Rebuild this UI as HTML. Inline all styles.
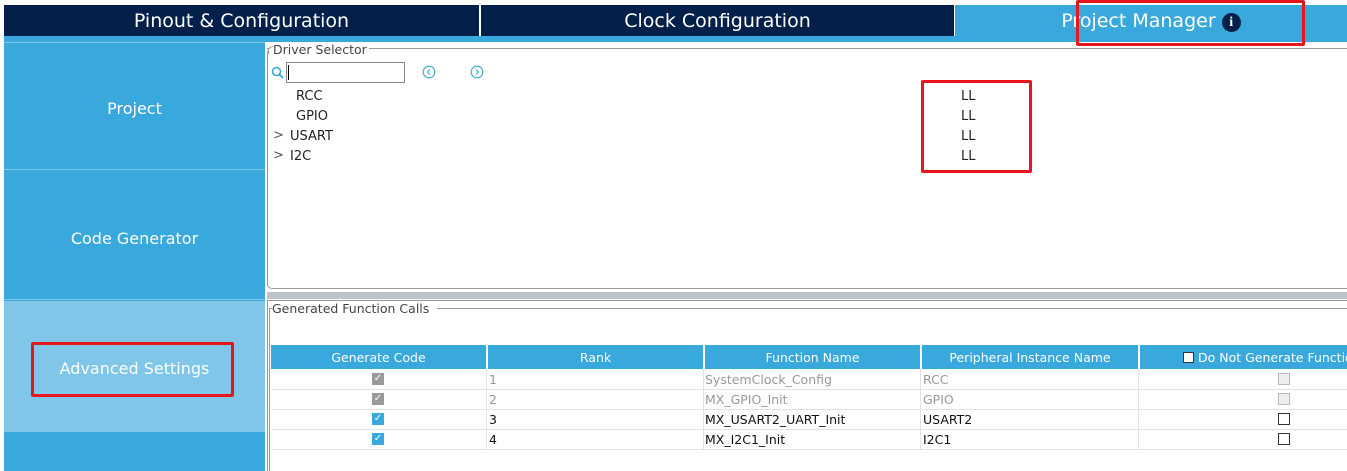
<!DOCTYPE html>
<html><head><style>
*{margin:0;padding:0;box-sizing:border-box}
body{width:1347px;height:471px;background:#fff;font-family:"Liberation Sans","DejaVu Sans",sans-serif;position:relative;overflow:hidden}
.a{position:absolute}
.tab{top:5px;height:31px;color:#fff;font-size:19px;text-align:center;line-height:33px;font-family:"DejaVu Sans",sans-serif}
.side{left:4px;width:261px;color:#fff;font-size:16px;text-align:center;font-family:"DejaVu Sans",sans-serif}
.t{font-size:13px;color:#222;font-family:"DejaVu Sans",sans-serif}
.hd{top:345px;height:24px;background:#39a8dc;color:#fff;font-size:12.5px;text-align:center;line-height:25px;font-family:"DejaVu Sans",sans-serif}
.cell{font-size:12.5px;font-family:"DejaVu Sans",sans-serif;line-height:21px}
.cb{width:12px;height:12px;border:1px solid #333;background:#fff}
.ck{width:12px;height:12px;background:#39a8dc;color:#fff;font-size:10px;line-height:12px;text-align:center}
.red{border:3px solid #e8141e;border-radius:2px}
</style></head><body>
<div class="a" style="left:4px;top:5px;width:1343px;height:31px;background:#03204a"></div>
<div class="a tab" style="left:4px;width:475px">Pinout &amp; Configuration</div>
<div class="a" style="left:479px;top:5px;width:2px;height:31px;background:#fff"></div>
<div class="a tab" style="left:481px;width:473px">Clock Configuration</div>
<div class="a" style="left:954px;top:5px;width:1px;height:31px;background:#fff"></div>
<div class="a tab" style="left:955px;width:392px;background:#39a8dc">Project Manager <span style="display:inline-block;width:19px;height:19px;border-radius:50%;background:#03204a;color:#fff;font-size:14px;line-height:19px;font-weight:bold;vertical-align:1px;font-family:'Liberation Serif',serif">i</span></div>
<div class="a" style="left:4px;top:36px;width:1343px;height:6px;background:#39a8dc"></div>
<div class="a" style="left:267px;top:48px;width:1080px;height:1px;background:#999"></div>
<div class="a red" style="left:1076px;top:0px;width:229px;height:46px"></div>

<div class="a" style="left:4px;top:42px;width:261px;height:429px;background:#39a8dc"></div>
<div class="a" style="left:4px;top:42px;width:261px;height:1px;background:#7fc6e8"></div>
<div class="a side" style="top:99px">Project</div>
<div class="a" style="left:4px;top:169px;width:261px;height:1px;background:#7fc6e8"></div>
<div class="a side" style="top:229px">Code Generator</div>
<div class="a" style="left:4px;top:299px;width:261px;height:1px;background:#7fc6e8"></div>
<div class="a" style="left:4px;top:301px;width:261px;height:131px;background:#7fc6e8"></div>
<div class="a side" style="top:359px">Advanced Settings</div>
<div class="a red" style="left:31px;top:342px;width:203px;height:55px"></div>

<div class="a" style="left:267px;top:48px;width:1090px;height:241px;border:1px solid #999;border-radius:5px 0 0 5px;border-top:none"></div>
<div class="a" style="left:268px;top:46px;width:8px;height:8px;border-left:1px solid #999;border-top:1px solid #999;border-radius:5px 0 0 0;background:#fff"></div>
<div class="a t" style="left:273px;top:42px;background:#fff;padding-right:2px;color:#444;font-size:12.5px">Driver Selector</div>
<svg class="a" style="left:271px;top:66px" width="14" height="14"><circle cx="5.5" cy="5.5" r="4" fill="none" stroke="#39a8dc" stroke-width="1.6"/><path d="M8.5 8.5L12 12" stroke="#39a8dc" stroke-width="1.8"/></svg>
<div class="a" style="left:286px;top:62px;width:119px;height:21px;border:1px solid #888"></div>
<div class="a" style="left:288px;top:65px;width:1px;height:15px;background:#000"></div>
<svg class="a" style="left:422px;top:65px" width="14" height="14"><circle cx="7" cy="7" r="5.8" fill="none" stroke="#39a8dc" stroke-width="1.1"/><path d="M8 4.5L5.5 7L8 9.5" fill="none" stroke="#39a8dc" stroke-width="1.1"/></svg>
<svg class="a" style="left:470px;top:65px" width="14" height="14"><circle cx="7" cy="7" r="5.8" fill="none" stroke="#39a8dc" stroke-width="1.1"/><path d="M6 4.5L8.5 7L6 9.5" fill="none" stroke="#39a8dc" stroke-width="1.1"/></svg>
<div class="a t" style="left:296px;top:89px">RCC</div>
<div class="a t" style="left:296px;top:109px">GPIO</div>
<div class="a t" style="left:273px;top:128px;color:#555">&gt;</div><div class="a t" style="left:290px;top:129px">USART</div>
<div class="a t" style="left:273px;top:148px;color:#555">&gt;</div><div class="a t" style="left:290px;top:149px">I2C</div>
<div class="a t" style="left:961px;top:89px">LL</div>
<div class="a t" style="left:961px;top:109px">LL</div>
<div class="a t" style="left:961px;top:129px">LL</div>
<div class="a t" style="left:961px;top:149px">LL</div>
<div class="a red" style="left:921px;top:80px;width:111px;height:93px"></div>

<div class="a" style="left:267px;top:292px;width:1080px;height:7px;background:#bcc4c9"></div>
<div class="a" style="left:267px;top:300px;width:1080px;height:171px;border-left:1px solid #999;border-top:1px solid #999"></div>
<div class="a" style="left:269px;top:308px;width:1078px;height:1px;background:#999"></div>
<div class="a" style="left:269px;top:308px;width:1px;height:163px;background:#999"></div>
<div class="a t" style="left:272px;top:301px;background:#fff;padding-right:8px;color:#444;font-size:12.5px">Generated Function Calls</div>

<div class="a hd" style="left:271px;width:215px">Generate Code</div>
<div class="a hd" style="left:488px;width:215px">Rank</div>
<div class="a hd" style="left:705px;width:215px">Function Name</div>
<div class="a hd" style="left:922px;width:216px">Peripheral Instance Name</div>
<div class="a hd" style="left:1140px;width:207px;text-align:left;padding-left:43px;white-space:nowrap"><span style="display:inline-block;width:11px;height:11px;background:#fff;border:1px solid #333;vertical-align:-1px"></span> Do Not Generate Function Call</div>

<div class="a" style="left:271px;top:389px;width:1076px;height:1px;background:#e2e2e2"></div>
<div class="a" style="left:271px;top:409px;width:1076px;height:1px;background:#e2e2e2"></div>
<div class="a" style="left:271px;top:429px;width:1076px;height:1px;background:#e2e2e2"></div>
<div class="a" style="left:271px;top:449px;width:1076px;height:1px;background:#e2e2e2"></div>
<div class="a" style="left:486px;top:369px;width:1px;height:80px;background:#e2e2e2"></div>
<div class="a" style="left:703px;top:369px;width:1px;height:80px;background:#e2e2e2"></div>
<div class="a" style="left:920px;top:369px;width:1px;height:80px;background:#e2e2e2"></div>
<div class="a" style="left:1138px;top:369px;width:1px;height:80px;background:#e2e2e2"></div>

<div class="a ck" style="left:372px;top:373px;background:#9a9a9a">✓</div>
<div class="a ck" style="left:372px;top:393px;background:#9a9a9a">✓</div>
<div class="a ck" style="left:372px;top:413px">✓</div>
<div class="a ck" style="left:372px;top:433px">✓</div>

<div class="a cell" style="left:489px;top:369px;color:#999">1</div>
<div class="a cell" style="left:489px;top:389px;color:#999">2</div>
<div class="a cell" style="left:489px;top:409px;color:#111">3</div>
<div class="a cell" style="left:489px;top:429px;color:#111">4</div>
<div class="a cell" style="left:705px;top:369px;color:#999">SystemClock_Config</div>
<div class="a cell" style="left:705px;top:389px;color:#999">MX_GPIO_Init</div>
<div class="a cell" style="left:705px;top:409px;color:#111">MX_USART2_UART_Init</div>
<div class="a cell" style="left:705px;top:429px;color:#111">MX_I2C1_Init</div>
<div class="a cell" style="left:923px;top:369px;color:#999">RCC</div>
<div class="a cell" style="left:923px;top:389px;color:#999">GPIO</div>
<div class="a cell" style="left:923px;top:409px;color:#111">USART2</div>
<div class="a cell" style="left:923px;top:429px;color:#111">I2C1</div>

<div class="a cb" style="left:1278px;top:373px;border-color:#bbb;background:#eee"></div>
<div class="a cb" style="left:1278px;top:393px;border-color:#bbb;background:#eee"></div>
<div class="a cb" style="left:1278px;top:413px"></div>
<div class="a cb" style="left:1278px;top:433px"></div>
</body></html>
